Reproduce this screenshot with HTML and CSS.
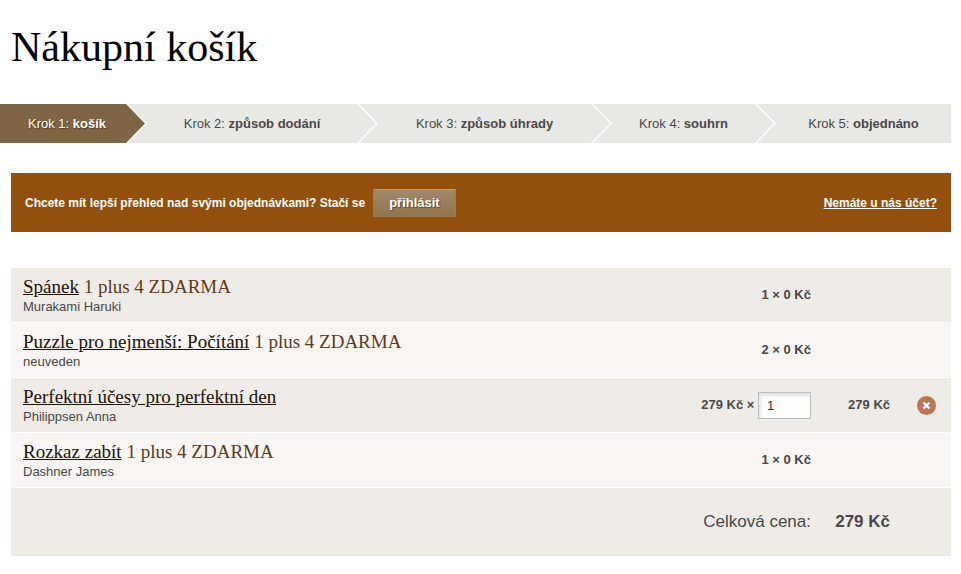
FILE: index.html
```html
<!DOCTYPE html>
<html lang="cs">
<head>
    <meta charset="UTF-8">
    <meta name="viewport" content="width=device-width, initial-scale=1.0">
    <title>Nákupní košík</title>
    <link rel="stylesheet" href="styles.css">
</head>
<body>
    <h1>Nákupní košík</h1>

    <ol class="steps">
        <li class="active"><span>Krok 1: <strong>košík</strong></span></li>
        <li><span>Krok 2: <strong>způsob dodání</strong></span></li>
        <li><span>Krok 3: <strong>způsob úhrady</strong></span></li>
        <li><span>Krok 4: <strong>souhrn</strong></span></li>
        <li><span>Krok 5: <strong>objednáno</strong></span></li>
    </ol>

    <main>
        <div class="login-bar">
            <p>Chcete mít lepší přehled nad svými objednávkami? Stačí se</p>
            <button type="button" class="login">přihlásit</button>
            <a href="#" class="register">Nemáte u nás účet?</a>
        </div>

        <table class="cart">
            <tbody>
                <tr>
                    <td class="item"><h2><a href="#">Spánek</a> 1 plus 4 ZDARMA</h2><p>Murakami Haruki</p></td>
                    <td class="count">1 × 0 Kč</td>
                    <td class="price"></td>
                    <td class="remove"></td>
                </tr>
                <tr>
                    <td class="item"><h2><a href="#">Puzzle pro nejmenší: Počítání</a> 1 plus 4 ZDARMA</h2><p>neuveden</p></td>
                    <td class="count">2 × 0 Kč</td>
                    <td class="price"></td>
                    <td class="remove"></td>
                </tr>
                <tr>
                    <td class="item"><h2><a href="#">Perfektní účesy pro perfektní den</a></h2><p>Philippsen Anna</p></td>
                    <td class="count"><label for="qty">279 Kč ×</label> <input type="text" id="qty" value="1"></td>
                    <td class="price">279 Kč</td>
                    <td class="remove">
                        <button type="button" aria-label="Odebrat">
                            <svg width="19" height="19" viewBox="0 0 19 19">
                                <circle cx="9.5" cy="9.5" r="9.5" fill="#bc7455"/>
                                <path d="M6.5 6.5l6 6M12.5 6.5l-6 6" stroke="#fff" stroke-width="2.4"/>
                            </svg>
                        </button>
                    </td>
                </tr>
                <tr>
                    <td class="item"><h2><a href="#">Rozkaz zabít</a> 1 plus 4 ZDARMA</h2><p>Dashner James</p></td>
                    <td class="count">1 × 0 Kč</td>
                    <td class="price"></td>
                    <td class="remove"></td>
                </tr>
            </tbody>
            <tfoot>
                <tr>
                    <td colspan="2">Celková cena:</td>
                    <td class="total">279 Kč</td>
                    <td></td>
                </tr>
            </tfoot>
        </table>
    </main>
</body>
</html>
```
FILE: styles.css
```css
body {
    margin: 0;
    padding: 0 10px 18px 0;
    background: #fff;
    color: #484848;
    font: 13px/18px "Liberation Sans", Arial, sans-serif;
}

h1 {
    margin: 0;
    padding: 22px 0 32px 11px;
    color: #000;
    font: 42px/50px Georgia, "Liberation Serif", serif;
}

p {
    margin: 0;
}

/* Kroky objednavky */
.steps {
    display: grid;
    grid-template-columns: 126fr 231fr 234fr 164fr 196fr;
    margin: 0;
    padding: 0;
    list-style: none;
}

.steps li {
    position: relative;
    padding: 11px 0 10px 21px;
    background: #e8e9e4;
    text-align: center;
}

.steps li.active {
    padding-left: 8px;
    background: #806544;
    color: #fff;
    text-shadow: 1px 1px 1px #4b3a24;
}

.steps li:not(:last-child)::before,
.steps li:not(:last-child)::after {
    content: "";
    position: absolute;
    z-index: 1;
    top: 0;
    left: 100%;
    width: 21px;
    height: 100%;
    background: #fff;
    clip-path: polygon(0 0, 2px 0, 100% 50%, 2px 100%, 0 100%);
}

.steps li:not(:last-child)::after {
    width: 19px;
    background: #e8e9e4;
    clip-path: polygon(0 0, 100% 50%, 0 100%);
}

.steps li.active::after {
    background: #806544;
}

main {
    padding: 30px 0 0 11px;
}

/* Prihlaseni */
.login-bar {
    display: flex;
    align-items: center;
    gap: 8px;
    margin-bottom: 36px;
    padding: 16px 14px 15px;
    background: #934f0c;
    color: #fff;
    font-size: 12px;
    font-weight: bold;
}

.login {
    padding: 4px 15px;
    border: 1px solid #9b7c55;
    border-top-color: #b6a083;
    background: linear-gradient(#a2876a, #91754c);
    color: #fff;
    font: bold 13px/18px "Liberation Sans", Arial, sans-serif;
    text-shadow: 1px 1px 1px #5c4628;
    cursor: pointer;
}

.register {
    margin-left: auto;
    color: #fff;
}

/* Kosik */
.cart {
    width: 100%;
    border-spacing: 0;
}

.cart td {
    padding: 0;
    text-align: right;
}

.cart tbody tr {
    height: 55px;
    background: #f8f5f2;
}

.cart tbody td {
    border-bottom: 1px solid #fff;
}

.cart tbody tr:nth-child(odd),
.cart tfoot tr {
    background: #efece7;
}

.cart td.item {
    padding: 2px 0 0 12px;
    text-align: left;
}

.item h2 {
    margin: 0;
    color: #5d3a1a;
    font: 19px/22px Georgia, "Liberation Serif", serif;
}

.item a {
    color: #1c1208;
}

.count,
.price {
    font-weight: bold;
    white-space: nowrap;
}

.count input {
    box-sizing: border-box;
    width: 53px;
    height: 27px;
    padding: 0 8px;
    border: 1px solid #bebfbc;
    background: #fdfdfb;
    box-shadow: inset 2px 3px 3px #e4e6e1;
    color: #3a2a18;
    font: 13px "Liberation Sans", Arial, sans-serif;
    vertical-align: middle;
}

.price {
    width: 79px;
}

.cart td.remove {
    width: 46px;
    padding-right: 15px;
}

.remove button {
    display: block;
    margin-left: auto;
    padding: 0;
    border: 0;
    background: none;
    cursor: pointer;
}

.remove svg {
    display: block;
}

.cart tfoot tr {
    height: 68px;
    font-size: 17px;
}

.total {
    font-weight: bold;
}
```
